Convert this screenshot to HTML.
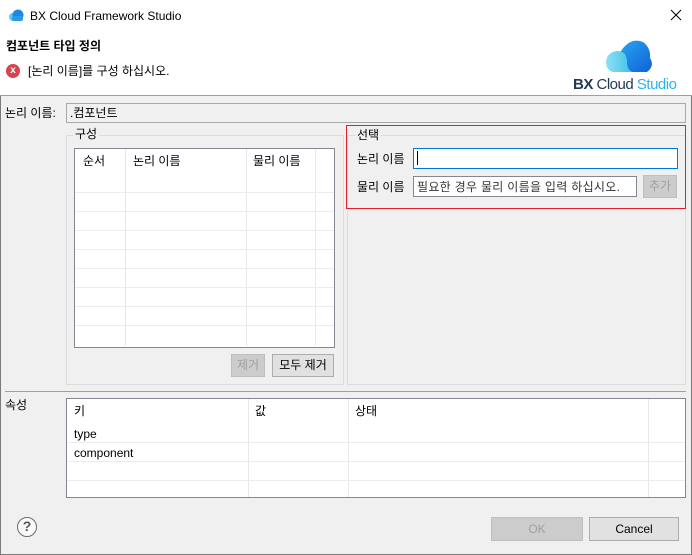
<!DOCTYPE html><html><head><meta charset="utf-8"><style>
*{box-sizing:border-box;margin:0;padding:0}
body{width:692px;height:555px;background:#f0f0f0;font-family:"Liberation Sans","Noto Sans CJK KR",sans-serif;font-size:12px;color:#000;position:relative;overflow:hidden}
.a{position:absolute}
.t{position:absolute;white-space:nowrap;line-height:14px}
.tb{border:1px solid #828790;background:#fff}
.vl{position:absolute;width:1px;background:#e8e8e8}
.hl{position:absolute;height:1px;background:#ececec}
.btn{position:absolute;border:1px solid #adadad;background:#e1e1e1;text-align:center;line-height:21px}
.dis{color:#a0a0a0;background:#cccccc;border-color:#bfbfbf}
</style></head><body>
<div class="a" style="left:0;top:0;width:692px;height:555px;border:1px solid #7a7a7a;border-top:none"></div>
<div class="a" style="left:0;top:0;width:692px;height:95px;background:#fff"></div>
<div class="a" style="left:0;top:95px;width:692px;height:1px;background:#a0a0a0"></div>
<svg class="a" style="left:8px;top:9px" width="16" height="12" viewBox="0 0 16 12"><ellipse cx="5" cy="8" rx="4" ry="4" fill="#5cc8ee"/><ellipse cx="10" cy="6" rx="5.5" ry="5.5" fill="#1e88e0"/><rect x="4" y="7" width="11" height="5" rx="2" fill="#2a9ae8"/></svg>
<div class="t" style="left:30px;top:9px">BX Cloud Framework Studio</div>
<svg class="a" style="left:670px;top:9px" width="12" height="12" viewBox="0 0 12 12"><path d="M1 1L11 11M11 1L1 11" stroke="#000" stroke-width="1"/></svg>
<div class="t" style="left:6px;top:39px;font-weight:bold">컴포넌트 타입 정의</div>
<div class="a" style="left:6px;top:64px;width:14px;height:14px;border-radius:50%;background:#d9434e;color:#fff;font-size:10px;text-align:center;line-height:14px;font-weight:bold">x</div>
<div class="t" style="left:28px;top:64px">[논리 이름]를 구성 하십시오.</div>
<svg class="a" style="left:603px;top:36px" width="52" height="38" viewBox="0 0 52 38"><defs><linearGradient id="g1" x1="0" y1="0" x2="1" y2="1"><stop offset="0" stop-color="#2aa8f0"/><stop offset="1" stop-color="#1060d8"/></linearGradient><linearGradient id="g2" x1="0" y1="0" x2="1" y2="0"><stop offset="0" stop-color="#8ee0f4"/><stop offset="1" stop-color="#3cc0e8"/></linearGradient></defs><path d="M16 36 Q12 20 22 10 Q30 2 40 6 Q48 12 47 22 Q52 30 44 36 Z" fill="url(#g1)"/><path d="M10 36 Q3 34 3 26 Q4 16 14 15 Q24 15 24 26 Q24 34 30 36 Z" fill="url(#g2)"/></svg>
<div class="t" style="left:573px;top:76px;font-size:15px;line-height:18px;font-weight:bold;color:#233a52;letter-spacing:-0.5px">BX <span style="font-weight:normal">Cloud</span> <span style="font-weight:normal;color:#2fb4e6">Studio</span></div>

<div class="t" style="left:5px;top:106px">논리 이름:</div>
<div class="a" style="left:66px;top:103px;width:620px;height:20px;border:1px solid #a8a8a8;background:#f0f0f0"></div>
<div class="t" style="left:70px;top:106px">.컴포넌트</div>

<div class="a" style="left:66px;top:135px;width:278px;height:250px;border:1px solid #dcdcdc"></div>
<div class="t" style="left:73px;top:127px;background:#f0f0f0;padding:0 2px">구성</div>
<div class="a tb" style="left:74px;top:148px;width:261px;height:200px"></div>
<div class="t" style="left:83px;top:154px">순서</div>
<div class="t" style="left:133px;top:154px">논리 이름</div>
<div class="t" style="left:253px;top:154px">물리 이름</div>
<div class="vl" style="left:125px;top:149px;height:197px"></div>
<div class="vl" style="left:246px;top:149px;height:197px"></div>
<div class="vl" style="left:315px;top:149px;height:197px"></div>
<div class="hl" style="left:75px;top:192px;width:259px"></div>
<div class="hl" style="left:75px;top:211px;width:259px"></div>
<div class="hl" style="left:75px;top:230px;width:259px"></div>
<div class="hl" style="left:75px;top:249px;width:259px"></div>
<div class="hl" style="left:75px;top:268px;width:259px"></div>
<div class="hl" style="left:75px;top:287px;width:259px"></div>
<div class="hl" style="left:75px;top:306px;width:259px"></div>
<div class="hl" style="left:75px;top:325px;width:259px"></div>
<div class="btn dis" style="left:231px;top:354px;width:34px;height:23px">제거</div>
<div class="btn" style="left:272px;top:354px;width:62px;height:23px">모두 제거</div>

<div class="a" style="left:347px;top:135px;width:339px;height:250px;border:1px solid #dcdcdc"></div>
<div class="a" style="left:346px;top:125px;width:340px;height:84px;border:1px solid #e0202a"></div>
<div class="t" style="left:355px;top:128px;background:#f0f0f0;padding:0 2px">선택</div>
<div class="t" style="left:357px;top:152px">논리 이름</div>
<div class="a" style="left:413px;top:148px;width:265px;height:21px;border:1px solid #0078d7;background:#fff"></div>
<div class="a" style="left:417px;top:151px;width:1px;height:14px;background:#000"></div>
<div class="t" style="left:357px;top:180px">물리 이름</div>
<div class="a tb" style="left:413px;top:176px;width:224px;height:21px"></div>
<div class="t" style="left:417px;top:180px;color:#333;letter-spacing:0.3px">필요한 경우 물리 이름을 입력 하십시오.</div>
<div class="btn dis" style="left:643px;top:175px;width:34px;height:23px">추가</div>

<div class="a" style="left:5px;top:391px;width:681px;height:1px;background:#a0a0a0"></div>
<div class="t" style="left:5px;top:398px">속성</div>
<div class="a tb" style="left:66px;top:398px;width:620px;height:100px"></div>
<div class="t" style="left:74px;top:404px">키</div>
<div class="t" style="left:255px;top:404px">값</div>
<div class="t" style="left:355px;top:404px">상태</div>
<div class="vl" style="left:248px;top:399px;height:98px"></div>
<div class="vl" style="left:348px;top:399px;height:98px"></div>
<div class="vl" style="left:648px;top:399px;height:98px"></div>
<div class="t" style="left:74px;top:427px">type</div>
<div class="t" style="left:74px;top:446px">component</div>
<div class="hl" style="left:67px;top:442px;width:618px"></div>
<div class="hl" style="left:67px;top:461px;width:618px"></div>
<div class="hl" style="left:67px;top:480px;width:618px"></div>

<div class="a" style="left:17px;top:517px;width:20px;height:20px;border:1.5px solid #6a6a6a;border-radius:50%;background:#fafafa;text-align:center;line-height:17px;font-weight:bold;font-size:14px;color:#555">?</div>
<div class="btn dis" style="left:491px;top:517px;width:92px;height:24px;line-height:22px">OK</div>
<div class="btn" style="left:589px;top:517px;width:90px;height:24px;line-height:22px">Cancel</div>
</body></html>
